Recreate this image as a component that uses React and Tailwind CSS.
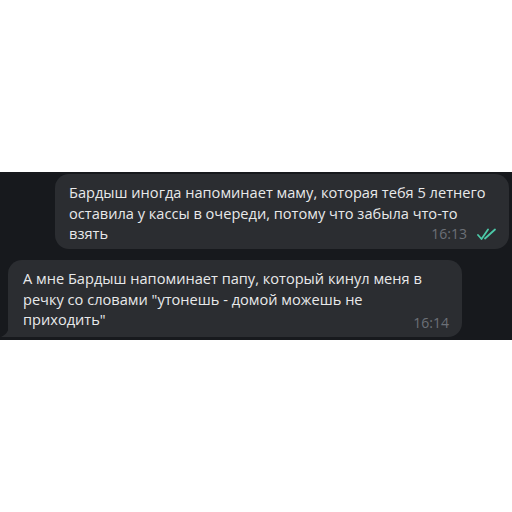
import React from "react";

const font = { fontFamily: '"Open Sans", "Noto Sans", sans-serif' };

function DoubleCheck() {
  return (
    <svg width="20" height="12" viewBox="0 0 20 12" fill="none" className="text-[#4cc9a8]">
      <path d="M1 7l3.5 4L11 1.5" stroke="currentColor" strokeWidth="1.8" strokeLinecap="round" strokeLinejoin="round" />
      <path d="M8 10.5L18 1.5" stroke="currentColor" strokeWidth="1.8" strokeLinecap="round" />
    </svg>
  );
}

export default function App() {
  return (
    <div className="w-[512px] h-[512px] bg-white" style={font}>
      <div className="h-[172px]" />
      <div className="h-[168px] bg-[#17191d] flex flex-col pt-[2px]">
        {/* outgoing */}
        <div className="ml-auto mr-[3px] w-[454px] h-[75px] rounded-[14px] bg-[#2b2d31] relative pl-[14px] pr-[16px] pt-[8px]">
          <p className="text-[14.6px] leading-[20.5px] text-[#e8e9ea]">
            Бардыш иногда напоминает маму, которая тебя 5 летнего оставила у кассы в очереди, потому что забыла что-то взять
          </p>
          <div className="absolute right-[12px] bottom-[5px] flex items-center gap-[10px]">
            <span className="text-[14px] text-[#6b7077]">16:13</span>
            <DoubleCheck />
          </div>
        </div>
        {/* incoming */}
        <div className="mt-[11px] ml-[8px] w-[454px] h-[77px] rounded-[14px] rounded-bl-none bg-[#2b2d31] relative pl-[15px] pr-[14px] pt-[8px]">
          <svg className="absolute left-[-7px] bottom-0" width="8" height="12" viewBox="0 0 8 12">
            <path d="M8 0v12H0c4-2 8-5 8-12z" fill="#2b2d31" />
          </svg>
          <p className="text-[14.6px] leading-[20.5px] text-[#e8e9ea] pr-[20px]">
            А мне Бардыш напоминает папу, который кинул меня в речку со словами "утонешь - домой можешь не приходить"
          </p>
          <span className="absolute right-[13px] bottom-[4px] text-[14px] text-[#6b7077]">16:14</span>
        </div>
      </div>
    </div>
  );
}
